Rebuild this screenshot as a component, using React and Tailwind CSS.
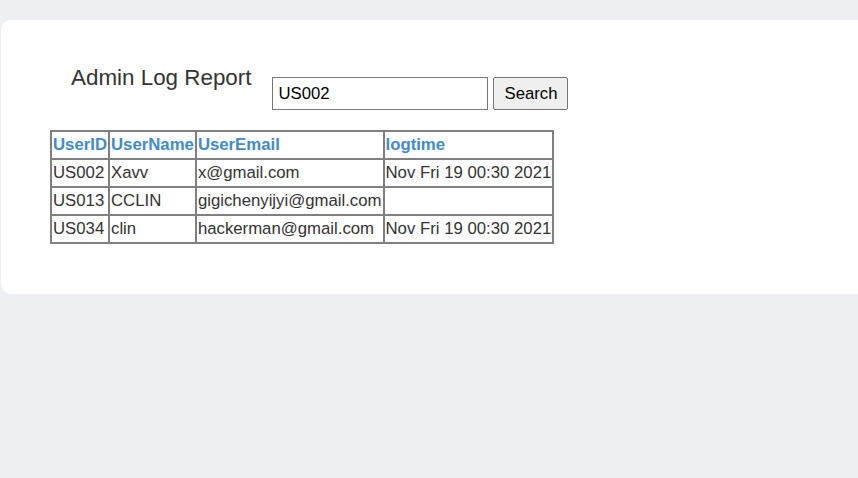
import React from "react";

const rows = [
  ["US002", "Xavv", "x@gmail.com", "Nov Fri 19 00:30 2021"],
  ["US013", "CCLIN", "gigichenyijyi@gmail.com", ""],
  ["US034", "clin", "hackerman@gmail.com", "Nov Fri 19 00:30 2021"],
];

export default function App() {
  return (
    <div
      className="min-h-screen w-full overflow-hidden bg-[#eeeff2] pt-5 pl-px"
      style={{ fontFamily: '"Liberation Sans", Arial, sans-serif' }}
    >
      <div className="h-[274px] w-[900px] rounded-[10px] bg-white pl-[49px] pt-[44px]">
        <div className="flex items-start">
          <h1 className="ml-[21px] text-[22.4px] leading-[28px] text-[#333333]">
            Admin Log Report
          </h1>
          <input
            className="ml-[21px] mt-[13px] h-[33px] w-[216px] border border-[#767676] px-[5px] text-[16.7px] text-black outline-none"
            defaultValue="US002"
          />
          <button className="ml-[5px] mt-[13px] h-[33px] w-[75px] rounded-[2px] border border-[#767676] bg-[#efefef] text-[16.7px] text-black">
            Search
          </button>
        </div>
        <table className="mt-[20px] border-separate border-spacing-0 border border-[#808080] text-[16.76px] leading-[24px] text-[#333333]">
          <thead>
            <tr>
              {["UserID", "UserName", "UserEmail", "logtime"].map((h) => (
                <th
                  key={h}
                  className="border border-[#808080] p-px text-left font-bold text-[#428bca]"
                >
                  {h}
                </th>
              ))}
            </tr>
          </thead>
          <tbody>
            {rows.map((r) => (
              <tr key={r[0]}>
                {r.map((c, i) => (
                  <td key={i} className="border border-[#808080] p-px">
                    {c}
                  </td>
                ))}
              </tr>
            ))}
          </tbody>
        </table>
      </div>
    </div>
  );
}
